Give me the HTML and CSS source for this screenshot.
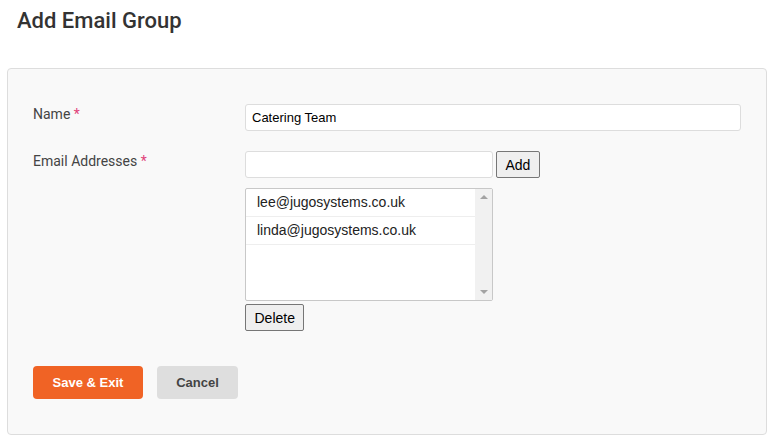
FILE: index.html
```html
<!DOCTYPE html>
<html lang="en">

<head>
    <meta charset="UTF-8">
    <meta name="viewport" content="width=device-width, initial-scale=1.0">
    <title>Add Email Group</title>
    <link rel="stylesheet" href="styles.css">
</head>

<body>
    <h2 class="page-title">Add Email Group</h2>

    <div class="panel">
        <div class="form-row">
            <label class="form-label">Name <span class="req">*</span></label>
            <div class="form-field">
                <input type="text" class="text-input wide" value="Catering Team">
            </div>
        </div>

        <div class="form-row">
            <label class="form-label">Email Addresses <span class="req">*</span></label>
            <div class="form-field">
                <div class="add-line">
                    <input type="text" class="text-input narrow">
                    <button class="plain-btn">Add</button>
                </div>
                <div class="email-list">
                    <div class="email-items">
                        <div class="email-item">lee@jugosystems.co.uk</div>
                        <div class="email-item">linda@jugosystems.co.uk</div>
                    </div>
                    <div class="scroll-bar">
                        <span class="arrow up"></span>
                        <span class="arrow down"></span>
                    </div>
                </div>
                <button class="plain-btn">Delete</button>
            </div>
        </div>

        <div class="actions">
            <button class="btn btn-save">Save &amp; Exit</button>
            <button class="btn btn-cancel">Cancel</button>
        </div>
    </div>
</body>

</html>
```

FILE: styles.css
```css
body {
    margin: 0;
    font-family: Roboto, "Liberation Sans", sans-serif;
    background: #fff;
    color: #444;
}

.page-title {
    margin: 0;
    padding: 7px 17px 0;
    font-size: 22px;
    font-weight: 500;
    color: #333;
    line-height: 28px;
}

.panel {
    margin: 33px 8px 12px 7px;
    background: #f9f9f9;
    border: 1px solid #ddd;
    border-radius: 4px;
    padding: 35px 25px 35px 25px;
}

.form-row {
    display: flex;
    margin-bottom: 20px;
}

.form-label {
    width: 212px;
    font-size: 14px;
    color: #444;
    line-height: 22px;
    margin-top: -1px;
}

.req {
    color: #e0427a;
}

.form-field {
    flex: 1;
}

.text-input {
    box-sizing: border-box;
    height: 27px;
    border: 1px solid #ddd;
    border-radius: 3px;
    background: #fff;
    padding: 0 6px;
    font-family: "Liberation Sans", Arial, sans-serif;
    font-size: 13px;
    color: #000;
}

.wide {
    width: 496px;
}

.narrow {
    width: 248px;
}

.add-line {
    display: flex;
    gap: 3px;
}

.plain-btn {
    box-sizing: border-box;
    height: 27px;
    padding: 0 8.5px;
    background: #efefef;
    border: 1px solid #767676;
    border-radius: 2px;
    font-family: "Liberation Sans", Arial, sans-serif;
    font-size: 14px;
    color: #000;
}

.email-list {
    display: flex;
    width: 248px;
    height: 113px;
    box-sizing: border-box;
    margin-top: 10px;
    margin-bottom: 3px;
    background: #fff;
    border: 1px solid #c8c8c8;
    border-radius: 2px;
}

.email-items {
    flex: 1;
}

.email-item {
    height: 27px;
    line-height: 27px;
    padding-left: 11px;
    border-bottom: 1px solid #eee;
    font-family: "Liberation Sans", Arial, sans-serif;
    font-size: 14px;
    color: #222;
}

.scroll-bar {
    width: 17px;
    background: #f1f1f1;
    display: flex;
    flex-direction: column;
    justify-content: space-between;
    align-items: center;
    padding: 6px 0;
}

.arrow {
    width: 0;
    height: 0;
    border-left: 4px solid transparent;
    border-right: 4px solid transparent;
}

.arrow.up {
    border-bottom: 4px solid #a3a3a3;
}

.arrow.down {
    border-top: 4px solid #a3a3a3;
}

.actions {
    display: flex;
    gap: 14px;
    margin-top: 35px;
}

.btn {
    height: 33px;
    border: none;
    border-radius: 4px;
    font-family: "Liberation Sans", Arial, sans-serif;
    font-size: 13px;
    font-weight: bold;
}

.btn-save {
    width: 110px;
    background: #f06325;
    color: #fff;
}

.btn-cancel {
    width: 81px;
    background: #dedede;
    color: #444;
}
```
